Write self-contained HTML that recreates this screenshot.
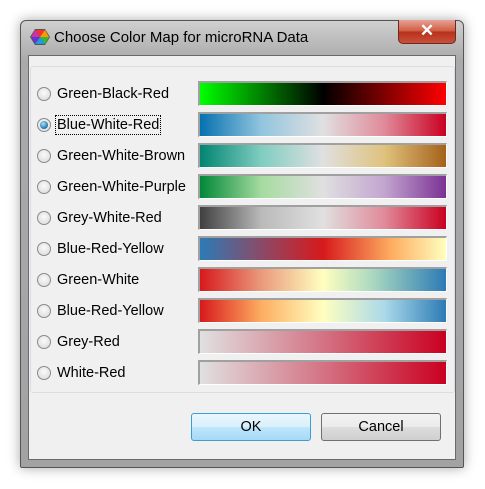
<!DOCTYPE html>
<html><head><style>
body{margin:0;width:485px;height:489px;background:#fff;position:relative;overflow:hidden;font-family:"Liberation Sans",sans-serif;}
.win{position:absolute;left:20px;top:20px;width:444px;height:448px;border:1px solid #555;border-radius:6px 6px 2px 2px;box-sizing:border-box;
background:linear-gradient(to bottom,#d0d0d0 0,#bcbcbc 20px,#aaaaaa 40px,#a2a2a2 100%);box-shadow:0 0 12px rgba(0,0,0,.35);}
.title{position:absolute;left:54px;top:29px;font-size:15px;color:#000;}
.ico{position:absolute;left:30px;top:28px;}
.close{position:absolute;left:398px;top:20px;width:58px;height:24px;border:1px solid #6b2a22;border-top:none;border-radius:0 0 5px 5px;box-sizing:border-box;
background:linear-gradient(#e7a295,#d0593f 50%,#b8301c 51%,#c8503a);color:#fff;font-size:17px;font-weight:bold;text-align:center;line-height:22px;}
.client{position:absolute;left:28px;top:55px;width:428px;height:405px;background:#f0f0f0;border:1px solid #6a6a6a;box-sizing:border-box;}
.panel{position:absolute;left:30px;top:66px;width:425px;height:327px;border:1px solid #d5dfe5;border-radius:3px;box-sizing:border-box;}
.row{position:absolute;left:0;height:25px;width:485px;}
.rad{position:absolute;left:37px;top:6px;width:14px;height:14px;border-radius:50%;border:1px solid #8a8a8a;box-sizing:border-box;background:radial-gradient(circle at 50% 40%,#fafafa,#d8d8d8);}
.rad.sel::after{content:"";position:absolute;left:2px;top:2px;width:8px;height:8px;border-radius:50%;background:radial-gradient(circle at 40% 35%,#a9e3fb,#1d6fa8 70%,#0b3f68);}
.lbl{position:absolute;left:57px;top:5px;font-size:14.5px;color:#000;}
.lbl.f{outline:1px dotted #000;padding:0 1px;left:56px;top:4px;line-height:18px;}
.bar{position:absolute;left:198px;top:0;width:249px;height:25px;border-top:2px solid #a0a0a0;border-left:2px solid #a0a0a0;border-bottom:1px solid #fff;border-right:1px solid #fff;box-sizing:border-box;}
.btn{position:absolute;top:413px;width:120px;height:28px;border:1px solid #707070;border-radius:3px;box-sizing:border-box;font-size:14.5px;text-align:center;line-height:26px;
background:linear-gradient(#f2f2f2 0,#ebebeb 50%,#dddddd 51%,#cfcfcf);}
.ok{left:191px;border-color:#3c9fd4;background:linear-gradient(#eaf6fd 0,#d9f0fc 50%,#bee6fd 51%,#a7d9f5);}
</style></head><body>
<div class="win"></div>
<svg class="ico" width="20" height="18" viewBox="0 0 20 18">
<polygon points="5,1 15,1 20,9 15,17 5,17 0,9" fill="#555"/>
<polygon points="10,9 5,2 15,2" fill="#e33"/>
<polygon points="10,9 15,2 19,9" fill="#f90"/>
<polygon points="10,9 19,9 15,16" fill="#3b3"/>
<polygon points="10,9 15,16 5,16" fill="#29d"/>
<polygon points="10,9 5,16 1,9" fill="#63c"/>
<polygon points="10,9 1,9 5,2" fill="#c3a"/>
</svg>
<div class="title">Choose Color Map for microRNA Data</div>
<div class="close">✕</div>
<div class="client"></div>
<div class="panel"></div>

<div class="row" style="top:81px"><div class="rad"></div><div class="lbl">Green-Black-Red</div><div class="bar" style="background:linear-gradient(to right,#00ff00,#000 50%,#ff0000)"></div></div>
<div class="row" style="top:112px"><div class="rad sel"></div><div class="lbl f">Blue-White-Red</div><div class="bar" style="background:linear-gradient(to right,#0571b0,#92c5de 25%,#e0e0e0 50%,#e08a9a 75%,#ca0020)"></div></div>
<div class="row" style="top:143px"><div class="rad"></div><div class="lbl">Green-White-Brown</div><div class="bar" style="background:linear-gradient(to right,#018571,#80cdc1 25%,#e0e0e0 50%,#dfc27d 75%,#a6611a)"></div></div>
<div class="row" style="top:174px"><div class="rad"></div><div class="lbl">Green-White-Purple</div><div class="bar" style="background:linear-gradient(to right,#008837,#a6dba0 25%,#e0e0e0 50%,#c2a5cf 75%,#7b3294)"></div></div>
<div class="row" style="top:205px"><div class="rad"></div><div class="lbl">Grey-White-Red</div><div class="bar" style="background:linear-gradient(to right,#404040,#bababa 25%,#e0e0e0 50%,#e08a9a 75%,#ca0020)"></div></div>
<div class="row" style="top:236px"><div class="rad"></div><div class="lbl">Blue-Red-Yellow</div><div class="bar" style="background:linear-gradient(to right,#2c7bb6,#8b4a68 25%,#d7191c 50%,#fdae61 78%,#ffffbf)"></div></div>
<div class="row" style="top:267px"><div class="rad"></div><div class="lbl">Green-White</div><div class="bar" style="background:linear-gradient(to right,#d7191c,#ea9a7c 25%,#ffffbf 50%,#abd9c0 70%,#2c7bb6)"></div></div>
<div class="row" style="top:298px"><div class="rad"></div><div class="lbl">Blue-Red-Yellow</div><div class="bar" style="background:linear-gradient(to right,#d7191c,#fdae61 25%,#ffffbf 50%,#abd9e9 75%,#2c7bb6)"></div></div>
<div class="row" style="top:329px"><div class="rad"></div><div class="lbl">Grey-Red</div><div class="bar" style="background:linear-gradient(to right,#e0e0e0,#d47384 50%,#ca0020)"></div></div>
<div class="row" style="top:360px"><div class="rad"></div><div class="lbl">White-Red</div><div class="bar" style="background:linear-gradient(to right,#e0e0e0,#d47384 50%,#ca0020)"></div></div>

<div class="btn ok">OK</div>
<div class="btn" style="left:321px">Cancel</div>
</body></html>
